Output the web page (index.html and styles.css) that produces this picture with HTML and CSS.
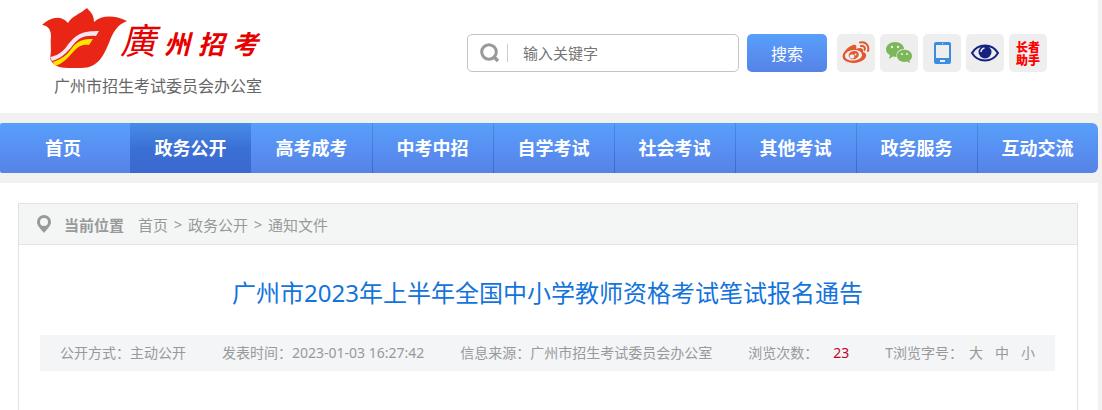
FILE: index.html
```html
<!DOCTYPE html>
<html lang="zh-CN">
<head>
  <meta charset="UTF-8">
  <meta name="viewport" content="width=device-width, initial-scale=1.0">
  <title>广州市2023年上半年全国中小学教师资格考试笔试报名通告</title>
  <link rel="stylesheet" href="styles.css">
</head>
<body>
  <header class="header">
    <a class="logo" href="#">
      <span class="logo-top">
        <svg class="logo-flower" viewBox="0 0 86 60" width="86" height="60" aria-hidden="true">
          <path fill="#e92615" d="M0 17C8 10 18 6 26 15C30 8 38 6 45 0C48 4 52 6 52 14C60 7 72 7 85 13C75 17 71 24 67 35C62 46 57 60 39 60H26C17 60 10 57 8 50C10 42 8 35 9 29C9 22 7 18 0 17Z"/>
          <path fill="#f3e6f2" d="M8 49C14 48 20 45 25 38C34 26 40 23 57 23L54 28C42 27 37 30 31 37C25 45 18 51 10 53Z"/>
          <path fill="#ffe500" d="M11 54C20 51 25 47 30 40C36 32 42 31 51 31L47 37C40 36 37 38 32 43C25 51 20 56 13 58Z"/>
        </svg>
        <span class="logo-name"><span class="logo-first">廣</span><span>州</span><span>招</span><span>考</span></span>
      </span>
      <span class="logo-sub">广州市招生考试委员会办公室</span>
    </a>

    <div class="tools">
      <form class="search">
        <div class="search-box">
          <svg width="20" height="20" viewBox="0 0 20 20" fill="none" stroke="#999" aria-hidden="true">
            <circle cx="9" cy="9" r="7.3" stroke-width="3"/>
            <path d="M13 13L18 18" stroke-width="3.4"/>
          </svg>
          <input type="text" name="keyword" placeholder="输入关键字" aria-label="输入关键字">
        </div>
        <button type="submit">搜索</button>
      </form>
      <a class="tool" href="#" aria-label="微博">
        <svg width="28" height="24" viewBox="0 0 28 24" aria-hidden="true">
          <path fill="#e2592d" fill-rule="evenodd" d="M11 4C14 3 15 5 14 8C18 6 22 7 21 11C25 12 25 16 22 18.500C18 22 11 23 6 21C0 19 -1 15 3 10C5 7 8 5 11 4ZM12 9C6 9.500 3 12 3 15C3 18 7 20 12 19.500C17 19 20 16.500 20 14C20 11 17 9 12 9Z"/>
          <path fill="#e2592d" fill-rule="evenodd" d="M12 10C8 10.500 6 13 7 16C8 18.500 11 19 14 17.500C17 16 17.500 13 16 11.500C15 10 14 10 12 10ZM10 13.500A2 2 0 1 1 10 17.400A2 2 0 1 1 10 13.500ZM13.500 12.500A1 1 0 1 1 13.500 14.500A1 1 0 1 1 13.500 12.500Z"/>
          <path fill="none" stroke="#e2592d" stroke-width="2" stroke-linecap="round" d="M18 1.500C24 0 27.500 5 26 10M19 5C22 4.500 23.500 6.500 22.500 9"/>
        </svg>
      </a>
      <a class="tool" href="#" aria-label="微信">
        <svg width="26" height="22" viewBox="0 0 26 22" aria-hidden="true">
          <path fill="#7cb759" d="M9 0C14 0 18 3 18 7C13 7 10 10 10.500 15L7 14.500L3 17L4 13C1.500 12 0 10 0 7.500C0 3.500 4 0 9 0Z"/>
          <path fill="#7cb759" d="M18.500 7.800C23 7.800 26 10.500 26 14C26 16 25 17.500 23.500 18.500L24 21L21 19.500C16 21 11 18 11 14C11 10.500 14 7.800 18.500 7.800Z"/>
          <g fill="#eee"><circle cx="6" cy="5" r="1.200"/><circle cx="12" cy="5" r="1.200"/><circle cx="16" cy="12" r="1.100"/><circle cx="21" cy="12" r="1.100"/></g>
        </svg>
      </a>
      <a class="tool" href="#" aria-label="手机版">
        <svg width="17" height="22" viewBox="0 0 17 22" aria-hidden="true">
          <rect width="17" height="22" rx="2" fill="#3c8ce0"/>
          <path fill="#eee" d="M2 3H15V16H2ZM6 18H11V20H6ZM8 1H9V2H8Z"/>
        </svg>
      </a>
      <a class="tool" href="#" aria-label="无障碍浏览">
        <svg width="28" height="18" viewBox="0 0 28 18" aria-hidden="true">
          <path fill="#eee" stroke="#14237f" stroke-width="2" d="M1 9C7 -1 21 -1 27 9C21 19 7 19 1 9Z"/>
          <circle cx="14" cy="8" r="6.500" fill="#14237f"/>
          <path fill="none" stroke="#eee" stroke-width="1.500" d="M10 8C10 6 11.500 4.500 13.500 4"/>
        </svg>
      </a>
      <a class="tool tool-elder" href="#">长者<br>助手</a>
    </div>
  </header>

  <nav class="nav">
    <a href="#">首页</a>
    <a class="active" href="#">政务公开</a>
    <a href="#">高考成考</a>
    <a href="#">中考中招</a>
    <a href="#">自学考试</a>
    <a href="#">社会考试</a>
    <a href="#">其他考试</a>
    <a href="#">政务服务</a>
    <a href="#">互动交流</a>
  </nav>

  <main class="main">
    <div class="panel">
      <div class="position">
        <svg width="14" height="18" viewBox="0 0 14 18" aria-hidden="true">
          <path fill="#999" fill-rule="evenodd" d="M7 0A7 7 0 0 1 14 7C14 11 10 14 7 18C4 14 0 11 0 7A7 7 0 0 1 7 0ZM7 3A4 4 0 1 0 7 11A4 4 0 1 0 7 3Z"/>
        </svg>
        <strong>当前位置</strong>
        <div class="crumbs">
          <a href="#">首页</a><span>&gt;</span><a href="#">政务公开</a><span>&gt;</span><a href="#">通知文件</a>
        </div>
      </div>

      <article class="article">
        <h1>广州市2023年上半年全国中小学教师资格考试笔试报名通告</h1>
        <div class="meta">
          <span>公开方式：主动公开</span>
          <span>发表时间：2023-01-03 16:27:42</span>
          <span>信息来源：广州市招生考试委员会办公室</span>
          <span>浏览次数：<b class="count">23</b></span>
          <span class="sizes">T浏览字号：<button type="button">大</button><button type="button">中</button><button type="button">小</button></span>
        </div>
      </article>
    </div>
  </main>
</body>
</html>
```
FILE: styles.css
```css
* {
  box-sizing: border-box;
  margin: 0;
  padding: 0;
}

body {
  min-height: 100vh;
  display: flex;
  flex-direction: column;
  padding-right: 4px;
  background: #f1f1f1;
  color: #999;
  font-family: "Noto Sans", "Noto Sans CJK SC", sans-serif;
  font-size: 14px;
}

a {
  color: inherit;
  text-decoration: none;
}

button,
input {
  border: none;
  background: none;
  color: inherit;
  font: inherit;
}

button {
  cursor: pointer;
}

svg {
  display: block;
  flex: none;
}

/* header */
.header {
  display: flex;
  justify-content: space-between;
  align-items: flex-start;
  padding: 8px 51px 14px 42px;
  background: #fff;
}

.logo-top {
  display: flex;
  height: 66px;
}

.logo-name {
  display: flex;
  gap: 8px;
  margin-left: -8px;
  color: #e60000;
  font-size: 26px;
  font-style: italic;
  font-weight: bold;
  line-height: 72px;
}

.logo-first {
  font-size: 36px;
  font-weight: normal;
  line-height: 66px;
}

.logo-sub {
  display: block;
  padding-left: 12px;
  color: #666;
  font-size: 16px;
  line-height: 25px;
}

.tools {
  display: flex;
  gap: 5px;
  padding-top: 26px;
}

.search {
  display: flex;
  gap: 8px;
  margin-right: 5px;
}

.search-box {
  display: flex;
  align-items: center;
  width: 272px;
  height: 38px;
  padding-left: 12px;
  border: 1px solid #c4c4c4;
  border-radius: 5px;
}

.search-box input {
  flex: 1;
  min-width: 0;
  height: 18px;
  margin-left: 7px;
  padding-left: 15px;
  border-left: 1px solid #ccc;
  font-size: 15px;
  outline: none;
}

.search-box input::placeholder {
  color: #757575;
}

.search button {
  width: 80px;
  height: 38px;
  border-radius: 5px;
  background: linear-gradient(#589ffc, #5782e6);
  color: #fff;
  font-size: 16px;
}

.tool {
  display: flex;
  justify-content: center;
  align-items: center;
  width: 38px;
  height: 38px;
  border-radius: 5px;
  background: #eee;
}

.tool-elder {
  color: #f00;
  font-family: "Noto Sans CJK SC", sans-serif;
  font-size: 12px;
  font-weight: 900;
  line-height: 13px;
}

/* navigation */
.nav {
  display: flex;
  margin: 10px 0;
  border-radius: 2px 6px 6px 2px;
  background: linear-gradient(#589ffc, #5782e6);
  overflow: hidden;
}

.nav a {
  flex: 121 1 0;
  position: relative;
  color: #fff;
  font-size: 18px;
  font-weight: bold;
  line-height: 50px;
  text-align: center;
}

.nav a:first-child {
  flex-grow: 130;
  text-indent: -4px;
}

.nav a + a + a + a::before {
  content: "";
  position: absolute;
  left: 0;
  top: 0;
  width: 1px;
  height: 100%;
  background: linear-gradient(#478de6, #3b68cf);
}

.nav .active {
  background: linear-gradient(#478de6, #3b70d5 50%, #3b68cf);
}

/* content */
.main {
  flex: 1;
  display: flex;
  padding: 20px 20px 0 18px;
  background: #fff;
}

.panel {
  flex: 1;
  border: 1px solid #e2e2e2;
  border-bottom: none;
}

.position {
  display: flex;
  align-items: center;
  height: 41px;
  padding-left: 18px;
  border-bottom: 1px solid #e2e2e2;
  background: #f4f6f6;
  font-size: 15px;
}

.position strong {
  margin: 0 14px 0 13px;
}

.crumbs {
  display: flex;
}

.crumbs span {
  width: 20px;
  text-align: center;
}

.article {
  padding: 28px 22px 40px 21px;
}

.article h1 {
  color: #1474dc;
  font-size: 24px;
  font-weight: normal;
  line-height: 40px;
  text-align: center;
}

.meta {
  display: flex;
  justify-content: space-between;
  margin-top: 22px;
  padding: 0 20px;
  background: #f3f5f7;
  line-height: 36px;
  white-space: nowrap;
}

.count {
  margin-left: 15px;
  color: #c7002b;
  font-weight: normal;
}

.sizes button {
  margin-left: 12px;
}

.sizes button:first-child {
  margin-left: 6px;
}
```
